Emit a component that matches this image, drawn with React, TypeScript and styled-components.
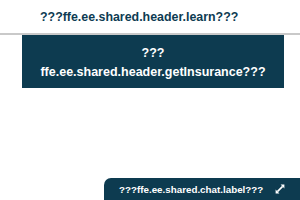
import styled, { createGlobalStyle } from "styled-components"

const GlobalStyle = createGlobalStyle`
    html, body {
        margin: 0;
        padding: 0;
        background: #ffffff;
        font-family: "Liberation Sans", Arial, sans-serif;
    }
`

export default function App() {
    return (
        <>
            <GlobalStyle />
            <Page>
                <Header>
                    <LearnLink>???ffe.ee.shared.header.learn???</LearnLink>
                </Header>
                <InsuranceButton>
                    ???<br />ffe.ee.shared.header.getInsurance???
                </InsuranceButton>
            </Page>
            <ChatBar>
                <ChatLabel>???ffe.ee.shared.chat.label???</ChatLabel>
                <ExpandIcon viewBox="0 0 10 10" width="10" height="10">
                    <path d="M5.6 0.6 H9.4 V4.4 Z" fill="#ffffff" />
                    <path d="M0.6 5.6 V9.4 H4.4 Z" fill="#ffffff" />
                    <path d="M7.6 2.4 L2.4 7.6" stroke="#ffffff" strokeWidth="1.6" />
                </ExpandIcon>
            </ChatBar>
        </>
    )
}

const Page = styled.div`
    width: 300px;
    height: 200px;
`
const Header = styled.div`
    height: 33px;
    display: flex;
    align-items: center;
    padding: 0 0 0 40px;
    border-bottom: 2px solid #c9c9c9;
`
const LearnLink = styled.span`
    font-size: 12.4px;
    font-weight: bold;
    color: #0d3b52;
    line-height: 1;
    margin-top: 1px;
`
const InsuranceButton = styled.div`
    margin: 0 16px 0 22px;
    padding: 9px 0 6px;
    background: #0d3b50;
    color: #ffffff;
    font-size: 12.5px;
    font-weight: bold;
    line-height: 19px;
    text-align: center;
`
const ChatBar = styled.div`
    position: fixed;
    right: 0;
    bottom: 0;
    width: 196px;
    height: 22px;
    box-sizing: border-box;
    padding: 0 15px;
    background: #0d3b50;
    border-top-left-radius: 7px;
    display: flex;
    align-items: center;
    justify-content: space-between;
`
const ChatLabel = styled.span`
    font-size: 9.8px;
    font-weight: bold;
    color: #ffffff;
`
const ExpandIcon = styled.svg`
    display: block;
`
